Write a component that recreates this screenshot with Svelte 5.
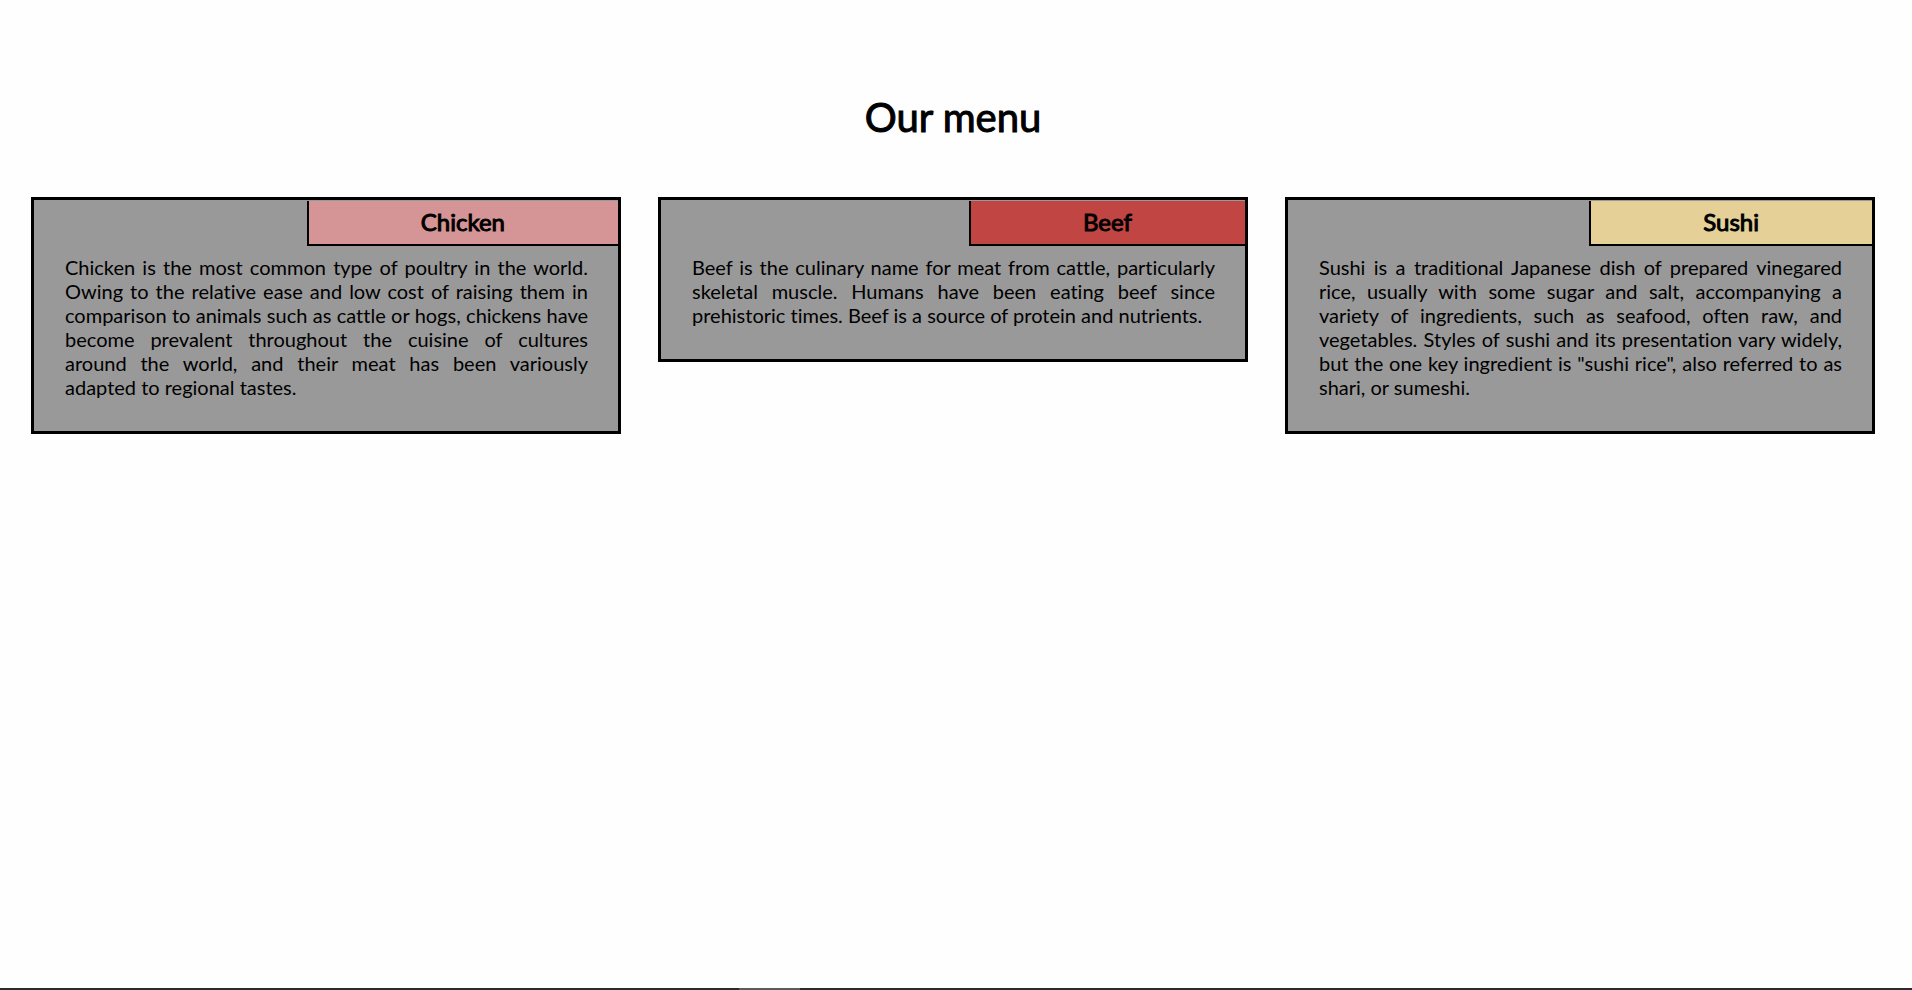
<script>
  const dishes = [
    {
      name: 'Chicken',
      tone: 'chicken',
      text: 'Chicken is the most common type of poultry in the world. Owing to the relative ease and low cost of raising them in comparison to animals such as cattle or hogs, chickens have become prevalent throughout the cuisine of cultures around the world, and their meat has been variously adapted to regional tastes.',
    },
    {
      name: 'Beef',
      tone: 'beef',
      text: 'Beef is the culinary name for meat from cattle, particularly skeletal muscle. Humans have been eating beef since prehistoric times. Beef is a source of protein and nutrients.',
    },
    {
      name: 'Sushi',
      tone: 'sushi',
      text: 'Sushi is a traditional Japanese dish of prepared vinegared rice, usually with some sugar and salt, accompanying a variety of ingredients, such as seafood, often raw, and vegetables. Styles of sushi and its presentation vary widely, but the one key ingredient is "sushi rice", also referred to as shari, or sumeshi.',
    },
  ];
</script>

<div class="page">
  <main>
    <h1>Our menu</h1>
    <div class="menu">
      {#each dishes as dish}
        <section class="card">
          <h2 class={dish.tone}>{dish.name}</h2>
          <p>{dish.text}</p>
        </section>
      {/each}
    </div>
  </main>
  <footer><span></span></footer>
</div>

<style>
  :global(body) {
    margin: 0;
    background: #fefefe;
  }

  .page {
    display: flex;
    flex-direction: column;
    min-height: 100vh;
    color: #000;
    font-family: Lato, 'Open Sans', sans-serif;
    font-variant-ligatures: none;
  }

  main {
    flex: 1;
    padding: 93px 37px 40px 31px;
  }

  h1 {
    margin: 0 0 56px;
    font-size: 40px;
    line-height: 48px;
    font-weight: 400;
    text-align: center;
    -webkit-text-stroke: 1px #000;
  }

  .menu {
    display: grid;
    grid-template-columns: repeat(auto-fit, minmax(400px, 1fr));
    align-items: start;
    gap: 37px;
  }

  .card {
    padding-top: 1px;
    border: 3px solid #000;
    background: #999;
  }

  h2 {
    box-sizing: border-box;
    width: fit-content;
    max-width: 100%;
    margin: 0 0 0 auto;
    padding: 6px 113px 8px 112px;
    border: solid #000;
    border-width: 0 0 2px 2px;
    font-size: 24px;
    line-height: 29px;
    font-weight: 400;
    -webkit-text-stroke: 1px #000;
  }

  .chicken {
    background: #d59596;
  }

  .beef {
    background: #c14543;
  }

  .sushi {
    background: #e5d198;
  }

  p {
    margin: 0;
    padding: 9px 30px 32px 31px;
    font-size: 20px;
    line-height: 24px;
    text-align: justify;
  }

  footer {
    display: grid;
    grid-template-columns: 739fr 61fr 1112fr;
    height: 2px;
    background: #2d2b2d;
  }

  footer span {
    grid-column: 2;
    background: #5c5a5c;
  }
</style>
